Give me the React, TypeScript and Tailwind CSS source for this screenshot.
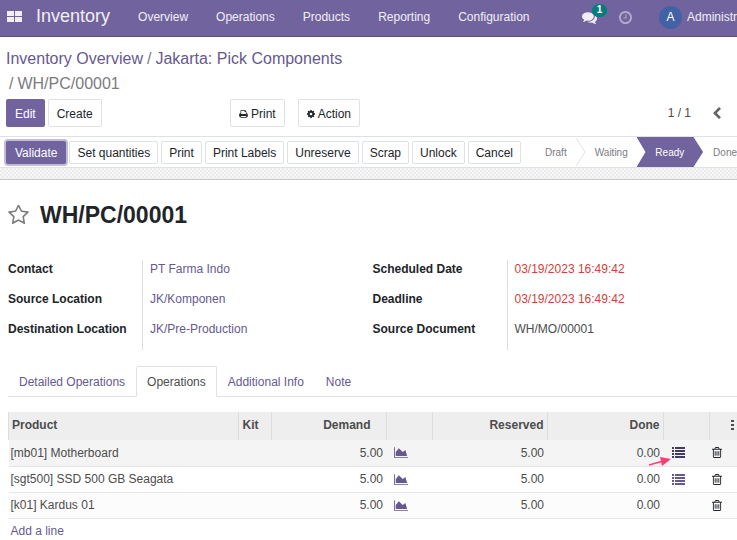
import type { ReactNode } from 'react';
import clsx from 'clsx';

interface IconProps {
  className?: string;
}

interface Field {
  label: string;
  value: string;
  kind: 'link' | 'late' | 'text';
}

interface Move {
  product: string;
  demand: string;
  reserved: string;
  done: string;
  hasDetails: boolean;
}

const menuItems = [
  'Overview',
  'Operations',
  'Products',
  'Reporting',
  'Configuration',
];

const statusButtons = [
  'Set quantities',
  'Print',
  'Print Labels',
  'Unreserve',
  'Scrap',
  'Unlock',
  'Cancel',
];

const leftFields: Field[] = [
  { label: 'Contact', value: 'PT Farma Indo', kind: 'link' },
  { label: 'Source Location', value: 'JK/Komponen', kind: 'link' },
  { label: 'Destination Location', value: 'JK/Pre-Production', kind: 'link' },
];

const rightFields: Field[] = [
  { label: 'Scheduled Date', value: '03/19/2023 16:49:42', kind: 'late' },
  { label: 'Deadline', value: '03/19/2023 16:49:42', kind: 'late' },
  { label: 'Source Document', value: 'WH/MO/00001', kind: 'text' },
];

const tabs = ['Detailed Operations', 'Operations', 'Additional Info', 'Note'];

const moves: Move[] = [
  {
    product: '[mb01] Motherboard',
    demand: '5.00',
    reserved: '5.00',
    done: '0.00',
    hasDetails: true,
  },
  {
    product: '[sgt500] SSD 500 GB Seagata',
    demand: '5.00',
    reserved: '5.00',
    done: '0.00',
    hasDetails: true,
  },
  {
    product: '[k01] Kardus 01',
    demand: '5.00',
    reserved: '5.00',
    done: '0.00',
    hasDetails: false,
  },
];

const AppsIcon = ({ className }: IconProps) => (
  <svg viewBox="0 0 15 12" className={className} fill="currentColor">
    <path d="M0 0h7v5H0zM8 0h7v5H8zM0 6h7v5H0zM8 6h7v5H8z" />
  </svg>
);

const CommentsIcon = ({ className }: IconProps) => (
  <svg viewBox="0 0 1792 1792" className={className} fill="currentColor">
    <path d="M1408 768q0 139-94 257t-256.500 186.500-353.500 68.500q-86 0-176-16-124 88-278 128-36 9-86 16h-3q-11 0-20.500-8t-11.500-21q-1-3-1-6.500t.5-6.500 2-6l2.500-5 3.500-5.500 4-5 4.500-5 4-4.500q5-6 23-25t26-29.500 22.500-29 25-38.500 20.500-44q-124-72-195-177t-71-224q0-139 94-257t256.500-186.500 353.500-68.500 353.500 68.500 256.500 186.500 94 257zm384 256q0 120-71 224.500t-195 176.500q10 24 20.500 44t25 38.500 22.500 29 26 29.500 23 25q1 1 4 4.500t4.500 5 4 5 3.500 5.500l2.500 5 2 6 .5 6.500-1 6.500q-3 14-13 22t-22 7q-50-7-86-16-154-40-278-128-90 16-176 16-271 0-472-132 58 4 88 4 161 0 309-45t264-129q125-92 192-212t67-254q0-77-23-152 129 71 204 178t75 230z" />
  </svg>
);

const ClockIcon = ({ className }: IconProps) => (
  <svg viewBox="128 128 1536 1536" className={className} fill="currentColor">
    <path d="M1024 544v448q0 14-9 23t-23 9h-320q-14 0-23-9t-9-23v-64q0-14 9-23t23-9h224v-352q0-14 9-23t23-9h64q14 0 23 9t9 23zm416 352q0-148-73-273t-198-198-273-73-273 73-198 198-73 273 73 273 198 198 273 73 273-73 198-198 73-273zm224 0q0 209-103 385.500t-279.500 279.500-385.500 103-385.500-103-279.500-279.500-103-385.500 103-385.500 279.500-279.500 385.500-103 385.500 103 279.500 279.500 103 385.500z" />
  </svg>
);

const StarIcon = ({ className }: IconProps) => (
  <svg viewBox="64 96 1664 1600" className={className} fill="currentColor">
    <path d="M1201 1004l306-297-422-62-189-382-189 382-422 62 306 297-73 421 378-199 377 199zm527-357q0 22-26 48l-363 354 86 500q1 7 1 20 0 50-41 50-19 0-40-12l-449-236-449 236q-22 12-40 12-21 0-31.500-14.500t-10.500-35.500q0-6 2-20l86-500-364-354q-25-27-25-48 0-37 56-46l502-73 225-455q19-41 49-41t49 41l225 455 502 73q56 9 56 46z" />
  </svg>
);

const PrintIcon = ({ className }: IconProps) => (
  <svg viewBox="64 128 1664 1536" className={className} fill="currentColor">
    <path d="M448 1536h896v-256h-896v256zm0-640h896v-384h-160q-40 0-68-28t-28-68v-160h-640v640zm1152 64q0-26-19-45t-45-19-45 19-19 45 19 45 45 19 45-19 19-45zm128 0v416q0 13-9.500 22.500t-22.500 9.500h-224v160q0 40-28 68t-68 28h-960q-40 0-68-28t-28-68v-160h-224q-13 0-22.500-9.500t-9.500-22.500v-416q0-79 56.500-135.500t135.500-56.500h64v-544q0-40 28-68t68-28h672q40 0 88 20t76 48l152 152q28 28 48 76t20 88v256h64q79 0 135.500 56.500t56.500 135.500z" />
  </svg>
);

const CogIcon = ({ className }: IconProps) => (
  <svg viewBox="128 128 1536 1536" className={className} fill="currentColor">
    <path d="M1152 896q0-106-75-181t-181-75-181 75-75 181 75 181 181 75 181-75 75-181zm512-109v222q0 12-8 23t-20 13l-185 28q-19 54-39 91 35 50 107 138 10 12 10 25t-9 23q-27 37-99 108t-94 71q-12 0-26-9l-138-108q-44 23-91 38-16 136-29 186-7 28-36 28h-222q-14 0-24.500-8.500t-11.500-21.500l-28-184q-49-16-90-37l-141 107q-10 9-25 9-14 0-25-11-126-114-165-168-7-10-7-23 0-12 8-23 15-21 51-66.500t54-70.500q-27-50-41-99l-183-27q-13-2-21-12.500t-8-23.500v-222q0-12 8-23t19-13l186-28q14-46 39-92-40-57-107-138-10-12-10-24 0-10 9-23 26-36 98.500-107.500t94.500-71.500q13 0 26 10l138 107q44-23 91-38 16-136 29-186 7-28 36-28h222q14 0 24.500 8.500t11.500 21.500l28 184q49 16 90 37l142-107q9-9 24-9 13 0 25 10 129 119 165 170 7 8 7 22 0 12-8 23-15 21-51 66.500t-54 70.500q26 50 41 98l183 28q13 2 21 12.500t8 23.500z" />
  </svg>
);

const ChevronLeftIcon = ({ className }: IconProps) => (
  <svg viewBox="400 0 1056 1640" className={className} fill="currentColor">
    <path d="M1427 301l-531 531 531 531q19 19 19 45t-19 45l-166 166q-19 19-45 19t-45-19l-742-742q-19-19-19-45t19-45l742-742q19-19 45-19t45 19l166 166q19 19 19 45t-19 45z" />
  </svg>
);

const AreaChartIcon = ({ className }: IconProps) => (
  <svg viewBox="0 128 2048 1536" className={className} fill="currentColor">
    <path d="M2048 1536v128h-2048v-1536h128v1408h1920zm-384-1024l256 896h-1664v-576l448-576 576 576z" />
  </svg>
);

const ListIcon = ({ className }: IconProps) => (
  <svg viewBox="0 0 13 11" className={className} fill="currentColor">
    <path d="M0 0h2v2H0zM3 0h10v2H3zM0 3h2v2H0zM3 3h10v2H3zM0 6h2v2H0zM3 6h10v2H3zM0 9h2v2H0zM3 9h10v2H3z" />
  </svg>
);

const TrashIcon = ({ className }: IconProps) => (
  <svg viewBox="192 128 1408 1536" className={className} fill="currentColor">
    <path d="M704 736v576q0 14-9 23t-23 9h-64q-14 0-23-9t-9-23v-576q0-14 9-23t23-9h64q14 0 23 9t9 23zm256 0v576q0 14-9 23t-23 9h-64q-14 0-23-9t-9-23v-576q0-14 9-23t23-9h64q14 0 23 9t9 23zm256 0v576q0 14-9 23t-23 9h-64q-14 0-23-9t-9-23v-576q0-14 9-23t23-9h64q14 0 23 9t9 23zm128 724v-948h-896v948q0 22 7 40.500t14.500 27 10.500 8.500h832q3 0 10.500-8.500t14.500-27 7-40.500zm-672-1076h448l-48-117q-7-9-17-11h-317q-10 2-17 11zm928 32v64q0 14-9 23t-23 9h-96v948q0 83-47 143.500t-113 60.500h-832q-66 0-113-58.500t-47-141.500v-952h-96q-14 0-23-9t-9-23v-64q0-14 9-23t23-9h309l70-167q15-37 54-63t79-26h320q40 0 79 26t54 63l70 167h309q14 0 23 9t9 23z" />
  </svg>
);

const KebabIcon = ({ className }: IconProps) => (
  <svg viewBox="0 0 3 10" className={className} fill="currentColor">
    <path d="M0 0h3v2H0zM0 4h3v2H0zM0 8h3v2H0z" />
  </svg>
);

const Navbar = () => (
  <header className="flex h-[37px] items-center overflow-hidden whitespace-nowrap border-b border-[#5a4f7f] bg-[#71639e] text-white/90">
    <button aria-label="Apps" className="ml-[7px] shrink-0 pb-0.5">
      <AppsIcon className="h-3 w-[15px]" />
    </button>
    <a href="#" className="ml-3.5 pb-1 text-[18px] leading-6">
      Inventory
    </a>
    <nav className="ml-7 flex gap-7 pb-0.5">
      {menuItems.map((item) => (
        <a key={item} href="#">
          {item}
        </a>
      ))}
    </nav>
    <div className="ml-auto flex w-[155px] shrink-0 items-center pb-0.5">
      <button aria-label="Messages" className="relative">
        <CommentsIcon className="size-[15px]" />
        <span className="absolute -top-1.5 left-2.5 flex h-[13px] w-[15px] items-center justify-center rounded-full bg-[#017e7c] text-[10px] font-bold text-white">
          1
        </span>
      </button>
      <button aria-label="Activities" className="ml-[22px] opacity-50">
        <ClockIcon className="size-[13px]" />
      </button>
      <button className="ml-[27px] flex items-center gap-[5px]">
        <span className="flex size-[23px] shrink-0 items-center justify-center rounded-full bg-[#4262a3] text-[12px] leading-none text-white">
          A
        </span>
        Administrator
      </button>
    </div>
  </header>
);

const PanelButton = ({ children }: { children: ReactNode }) => (
  <button className="flex h-7 items-center gap-[3px] rounded-xs border border-[#dee2e6] px-2 pt-0.5 text-[#212529]">
    {children}
  </button>
);

const ControlPanel = () => (
  <div className="px-1.5 pb-[9px] pt-[9px]">
    <div className="text-[16px] leading-[25px] text-[#7c7b7f]">
      <a href="#" className="text-[#66598f]">
        Inventory Overview
      </a>
      <span className="px-1">/</span>
      <a href="#" className="text-[#66598f]">
        Jakarta: Pick Components
      </a>
      <div className="pl-[3px]">
        /<span className="pl-1">WH/PC/00001</span>
      </div>
    </div>
    <div className="mt-[3px] flex items-center">
      <div className="flex w-[224px] gap-[3px]">
        <button className="h-7 rounded-xs bg-[#71639e] px-[9px] pt-0.5 text-white">
          Edit
        </button>
        <PanelButton>Create</PanelButton>
      </div>
      <div className="flex gap-[13px]">
        <PanelButton>
          <PrintIcon className="h-2 w-[9px]" />
          Print
        </PanelButton>
        <PanelButton>
          <CogIcon className="size-2" />
          Action
        </PanelButton>
      </div>
      <div className="ml-auto mr-2.5 flex items-center gap-[22px] text-[#4c4c4c]">
        <span>1 / 1</span>
        <button aria-label="Previous" className="text-[#666666]">
          <ChevronLeftIcon className="h-3 w-2" />
        </button>
      </div>
    </div>
  </div>
);

const StatusBar = () => (
  <div className="flex h-8 items-center overflow-hidden whitespace-nowrap border-y border-[#dee2e6] pl-1.5">
    <div className="flex shrink-0 gap-[3px]">
      <button className="h-[23px] rounded-xs bg-[#71639e] px-[9px] pt-0.5 text-white ring-2 ring-[#c3bcd8]">
        Validate
      </button>
      {statusButtons.map((label) => (
        <button
          key={label}
          className="h-[23px] rounded-xs border border-[#dee2e6] px-[7px] pt-0.5 text-[#212529]"
        >
          {label}
        </button>
      ))}
    </div>
    <div className="ml-auto flex h-full w-[192px] shrink-0 items-center text-[10px] text-[#7c7b7f]">
      <span className="w-[31px] pt-0.5">Draft</span>
      <svg viewBox="0 0 10 28" className="h-7 w-2.5" fill="none">
        <path d="M0 0l9 14-9 14" stroke="#dee2e6" />
      </svg>
      <span className="w-[51px] pl-[9px] pt-0.5">Waiting</span>
      <span className="flex h-full w-[67px] items-center justify-center bg-[#71639e] pt-0.5 text-white [clip-path:polygon(0_0,57px_0,100%_50%,57px_100%,0_100%,9px_50%)]">
        Ready
      </span>
      <span className="pl-2.5 pt-0.5">Done</span>
    </div>
  </div>
);

const valueColors = {
  link: 'text-[#66598f]',
  late: 'text-[#d23f3a]',
  text: 'text-[#4c4c4c]',
};

const FieldGroup = ({ fields }: { fields: Field[] }) => (
  <dl>
    {fields.map(({ label, value, kind }) => (
      <div key={label} className="flex">
        <dt className="w-[135px] shrink-0 border-r border-[#dddddd] pb-3 font-bold text-[#212529]">
          {label}
        </dt>
        <dd className={clsx('pl-[7px]', valueColors[kind])}>
          {kind === 'link' ? <a href="#">{value}</a> : value}
        </dd>
      </div>
    ))}
  </dl>
);

const Tabs = () => (
  <div
    role="tablist"
    className="flex h-[31px] border-b border-[#dee2e6] text-[#66598f]"
  >
    {tabs.map((tab) => {
      const active = tab === 'Operations';
      return (
        <button
          key={tab}
          role="tab"
          aria-selected={active}
          className={clsx(
            '-mb-px rounded-t-xs border px-2.5',
            active
              ? 'border-[#dee2e6] border-b-white bg-white text-[#4c4c4c]'
              : 'border-transparent',
          )}
        >
          {tab}
        </button>
      );
    })}
  </div>
);

const MovesTable = () => (
  <table className="w-full table-fixed text-[#4c4c4c]">
    <colgroup>
      <col />
      <col className="w-[33px]" />
      <col className="w-[115px]" />
      <col className="w-[46px]" />
      <col className="w-[115px]" />
      <col className="w-[116px]" />
      <col className="w-[46px]" />
      <col className="w-7" />
    </colgroup>
    <thead>
      <tr className="h-7 bg-[#eeeeee] [&>th]:border-l [&>th]:border-[#dddddd] [&>th]:pb-[3px]">
        <th className="pl-[3px] text-left">Product</th>
        <th className="pl-1 text-left">Kit</th>
        <th className="pr-[15px] text-right">Demand</th>
        <th />
        <th className="pr-[3px] text-right">Reserved</th>
        <th className="pr-[3px] text-right">Done</th>
        <th />
        <th>
          <button aria-label="Optional columns" className="block pl-[21px]">
            <KebabIcon className="h-2.5 w-[3px]" />
          </button>
        </th>
      </tr>
    </thead>
    <tbody>
      {moves.map((move, index) => (
        <tr
          key={move.product}
          className={clsx(
            'h-[26px] border-b border-[#e6e6e6]',
            index === 0 && 'bg-[#f4f4f4]',
            index === 2 && 'bg-[#fcfcfc]',
          )}
        >
          <td className="pl-0.5">{move.product}</td>
          <td />
          <td className="pr-[3px] text-right">{move.demand}</td>
          <td className="pl-2">
            <button aria-label="Forecast" className="block text-[#66598f]">
              <AreaChartIcon className="h-[11px] w-3.5" />
            </button>
          </td>
          <td className="pr-[3px] text-right">{move.reserved}</td>
          <td className="pr-[3px] text-right">{move.done}</td>
          <td className="pl-[9px]">
            {move.hasDetails && (
              <button
                aria-label="Details"
                className={clsx(
                  'relative block',
                  index === 0 ? 'text-[#443b60]' : 'text-[#66598f]',
                )}
              >
                <ListIcon className="h-[11px] w-[13px]" />
                {/* Pointer to the details button */}
                {index === 0 && (
                  <svg
                    viewBox="0 0 22 10"
                    className="absolute -left-[23px] top-2.5 h-2.5 w-[22px]"
                  >
                    <path d="M0 8l14-4" stroke="#ff3b76" strokeWidth="1.6" />
                    <path d="M11 0l11 2-9 7z" fill="#ff3b76" />
                  </svg>
                )}
              </button>
            )}
          </td>
          <td className="pl-[3px]">
            <button aria-label="Delete" className="block text-[#212529]">
              <TrashIcon className="h-[11px] w-2.5" />
            </button>
          </td>
        </tr>
      ))}
      <tr className="h-[26px]">
        <td colSpan={8} className="pl-0.5">
          <a href="#" className="text-[#66598f]">
            Add a line
          </a>
        </td>
      </tr>
    </tbody>
  </table>
);

export default function App() {
  return (
    <div className="min-h-screen overflow-hidden bg-white font-['Liberation_Sans',Arial,sans-serif] text-[12px] leading-[18px]">
      <Navbar />
      <ControlPanel />
      <StatusBar />
      <div className="h-3 border-b border-[#c8c8cc] bg-[conic-gradient(#ebebeb_25%,#f6f6f6_0_50%,#ebebeb_0_75%,#f6f6f6_0)] bg-[length:4px_4px]" />
      <main className="pl-2">
        <div className="flex items-center gap-[11px] pt-5">
          <button aria-label="Priority" className="text-[#7c7b7f]">
            <StarIcon className="h-5 w-[21px]" />
          </button>
          <h1 className="text-[23px] font-bold leading-[30px] text-[#212529]">
            WH/PC/00001
          </h1>
        </div>
        <div className="mt-[30px] grid grid-cols-2">
          <FieldGroup fields={leftFields} />
          <FieldGroup fields={rightFields} />
        </div>
        <div className="mt-4">
          <Tabs />
        </div>
        <div className="mt-[15px]">
          <MovesTable />
        </div>
      </main>
    </div>
  );
}
